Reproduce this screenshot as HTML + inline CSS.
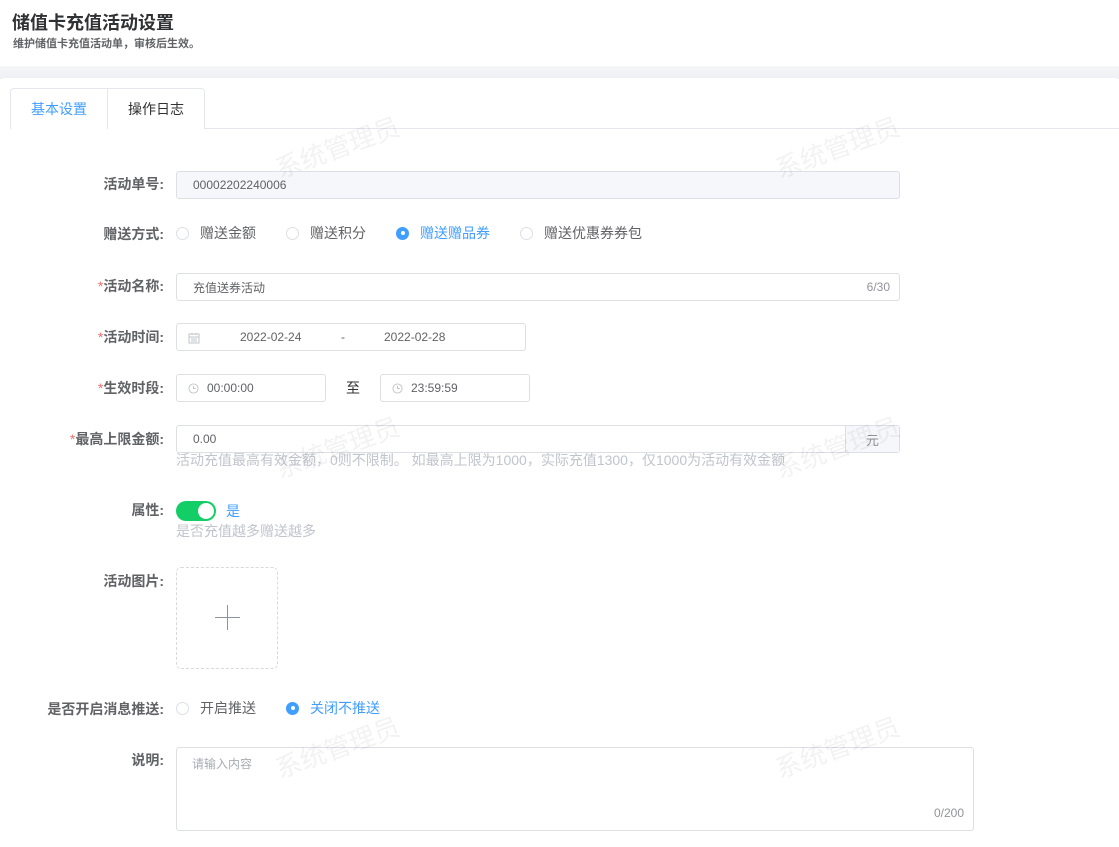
<!DOCTYPE html>
<html><head><meta charset="utf-8"><style>
*{box-sizing:border-box;margin:0;padding:0}
body{width:1119px;height:847px;overflow:hidden;background:#fff;font-family:"Liberation Sans","Noto Sans CJK SC",sans-serif;position:relative;color:#606266}
.a{position:absolute}
.lbl{position:absolute;right:955px;font-size:14px;font-weight:bold;color:#606266;white-space:nowrap;line-height:16px}
.lbl i{color:#f56c6c;font-style:normal;font-weight:normal}
.inp{position:absolute;border:1px solid #dcdfe6;border-radius:3px;background:#fff;font-size:12px;color:#606266;display:flex;align-items:center}
.r{position:absolute;font-size:14px;display:flex;align-items:center;white-space:nowrap;line-height:16px}
.r b{width:13px;height:13px;border:1px solid #dcdfe6;border-radius:50%;margin-right:11px;display:inline-block;background:#fff}
.r.on{color:#409eff}
.r.on b{background:#409eff;border-color:#409eff;position:relative}
.r.on b:after{content:"";position:absolute;left:3.5px;top:3.5px;width:4px;height:4px;border-radius:50%;background:#fff}
.hint{position:absolute;font-size:14px;color:#c0c4cc;white-space:nowrap;line-height:16px}
.wm{position:absolute;font-size:26px;color:rgba(0,0,0,0.05);transform:rotate(-20deg);white-space:nowrap}
</style></head><body>
<div class="a" style="left:12px;top:9px;font-size:18px;font-weight:bold;color:#303133">储值卡充值活动设置</div>
<div class="a" style="left:13px;top:35px;font-size:11px;font-weight:bold;color:#606266">维护储值卡充值活动单，审核后生效。</div>
<div class="a" style="left:0;top:66px;width:1119px;height:13px;background:linear-gradient(#f5f6f8,#eef0f3)"></div>
<div class="a" style="left:0;top:78px;width:1119px;height:769px;background:#fff;border-radius:4px 4px 0 0"></div>
<div class="a" style="left:10px;top:128px;width:1109px;height:1px;background:#e4e7ed"></div>
<div class="a" style="left:10px;top:88px;width:195px;height:41px;border:1px solid #e4e7ed;border-bottom:none;border-radius:4px 4px 0 0;background:#fff"></div>
<div class="a" style="left:107px;top:88px;width:1px;height:41px;background:#e4e7ed"></div>
<div class="a" style="left:31px;top:101px;font-size:14px;line-height:16px;color:#409eff">基本设置</div>
<div class="a" style="left:128px;top:101px;font-size:14px;line-height:16px;color:#303133">操作日志</div>

<div class="lbl" style="top:176px">活动单号:</div>
<div class="inp" style="left:176px;top:171px;width:724px;height:28px;background:#f5f7fa;padding-left:16px">00002202240006</div>

<div class="lbl" style="top:226px">赠送方式:</div>
<div class="r" style="left:176px;top:225px"><b></b>赠送金额</div>
<div class="r" style="left:286px;top:225px"><b></b>赠送积分</div>
<div class="r on" style="left:396px;top:225px"><b></b>赠送赠品券</div>
<div class="r" style="left:520px;top:225px"><b></b>赠送优惠券券包</div>

<div class="lbl" style="top:278px"><i>*</i>活动名称:</div>
<div class="inp" style="left:176px;top:273px;width:724px;height:28px;padding-left:16px">充值送券活动<span style="position:absolute;right:9px;color:#909399">6/30</span></div>

<div class="lbl" style="top:329px"><i>*</i>活动时间:</div>
<div class="inp" style="left:176px;top:323px;width:350px;height:28px">
<svg class="a" style="left:11px;top:8px" width="12" height="12" viewBox="0 0 12 12" fill="none" stroke="#c0c4cc"><rect x="1" y="2" width="10" height="9"/><path d="M1 5h10M4 1v2M8 1v2M3 7h6M3 9h6"/></svg>
<span class="a" style="left:63px;top:6px">2022-02-24</span><span class="a" style="left:164px;top:6px">-</span><span class="a" style="left:207px;top:6px">2022-02-28</span></div>

<div class="lbl" style="top:380px"><i>*</i>生效时段:</div>
<div class="inp" style="left:176px;top:374px;width:150px;height:28px;padding-left:30px"><svg class="a" style="left:11px;top:8px" width="11" height="11" viewBox="0 0 12 12" fill="none" stroke="#c0c4cc"><circle cx="6" cy="6" r="5"/><path d="M6 3v3h2.5"/></svg>00:00:00</div>
<div class="a" style="left:346px;top:380px;font-size:14px;line-height:16px;color:#303133">至</div>
<div class="inp" style="left:380px;top:374px;width:150px;height:28px;padding-left:30px"><svg class="a" style="left:11px;top:8px" width="11" height="11" viewBox="0 0 12 12" fill="none" stroke="#c0c4cc"><circle cx="6" cy="6" r="5"/><path d="M6 3v3h2.5"/></svg>23:59:59</div>

<div class="lbl" style="top:431px"><i>*</i>最高上限金额:</div>
<div class="inp" style="left:176px;top:425px;width:724px;height:28px;padding-left:16px">0.00<span style="position:absolute;right:0;top:0;width:54px;height:26px;background:#f5f7fa;border-left:1px solid #dcdfe6;display:flex;align-items:center;justify-content:center;color:#909399;font-size:13px">元</span></div>
<div class="hint" style="left:176px;top:452px">活动充值最高有效金额，0则不限制。 如最高上限为1000，实际充值1300，仅1000为活动有效金额</div>

<div class="lbl" style="top:502px">属性:</div>
<div class="a" style="left:176px;top:501px;width:40px;height:20px;border-radius:10px;background:#13ce66"></div>
<div class="a" style="left:198px;top:503px;width:16px;height:16px;border-radius:50%;background:#fff"></div>
<div class="a" style="left:226px;top:503px;font-size:14px;line-height:16px;color:#409eff">是</div>
<div class="hint" style="left:176px;top:523px">是否充值越多赠送越多</div>

<div class="lbl" style="top:573px">活动图片:</div>
<div class="a" style="left:176px;top:567px;width:102px;height:102px;border:1px dashed #d9d9d9;border-radius:5px"></div>
<div class="a" style="left:215px;top:617px;width:25px;height:1px;background:#8c939d"></div>
<div class="a" style="left:227px;top:605px;width:1px;height:25px;background:#8c939d"></div>

<div class="lbl" style="top:701px">是否开启消息推送:</div>
<div class="r" style="left:176px;top:700px"><b></b><span style="color:#606266">开启推送</span></div>
<div class="r on" style="left:286px;top:700px"><b></b>关闭不推送</div>

<div class="lbl" style="top:752px">说明:</div>
<div class="inp" style="left:176px;top:747px;width:798px;height:84px;align-items:flex-start;padding:7px 15px;color:#a8abb2">请输入内容<span style="position:absolute;right:9px;bottom:10px;color:#909399">0/200</span></div>

<div class="wm" style="left:272px;top:128px">系统管理员</div>
<div class="wm" style="left:772px;top:128px">系统管理员</div>
<div class="wm" style="left:272px;top:428px">系统管理员</div>
<div class="wm" style="left:772px;top:428px">系统管理员</div>
<div class="wm" style="left:272px;top:728px">系统管理员</div>
<div class="wm" style="left:772px;top:728px">系统管理员</div>
</body></html>
